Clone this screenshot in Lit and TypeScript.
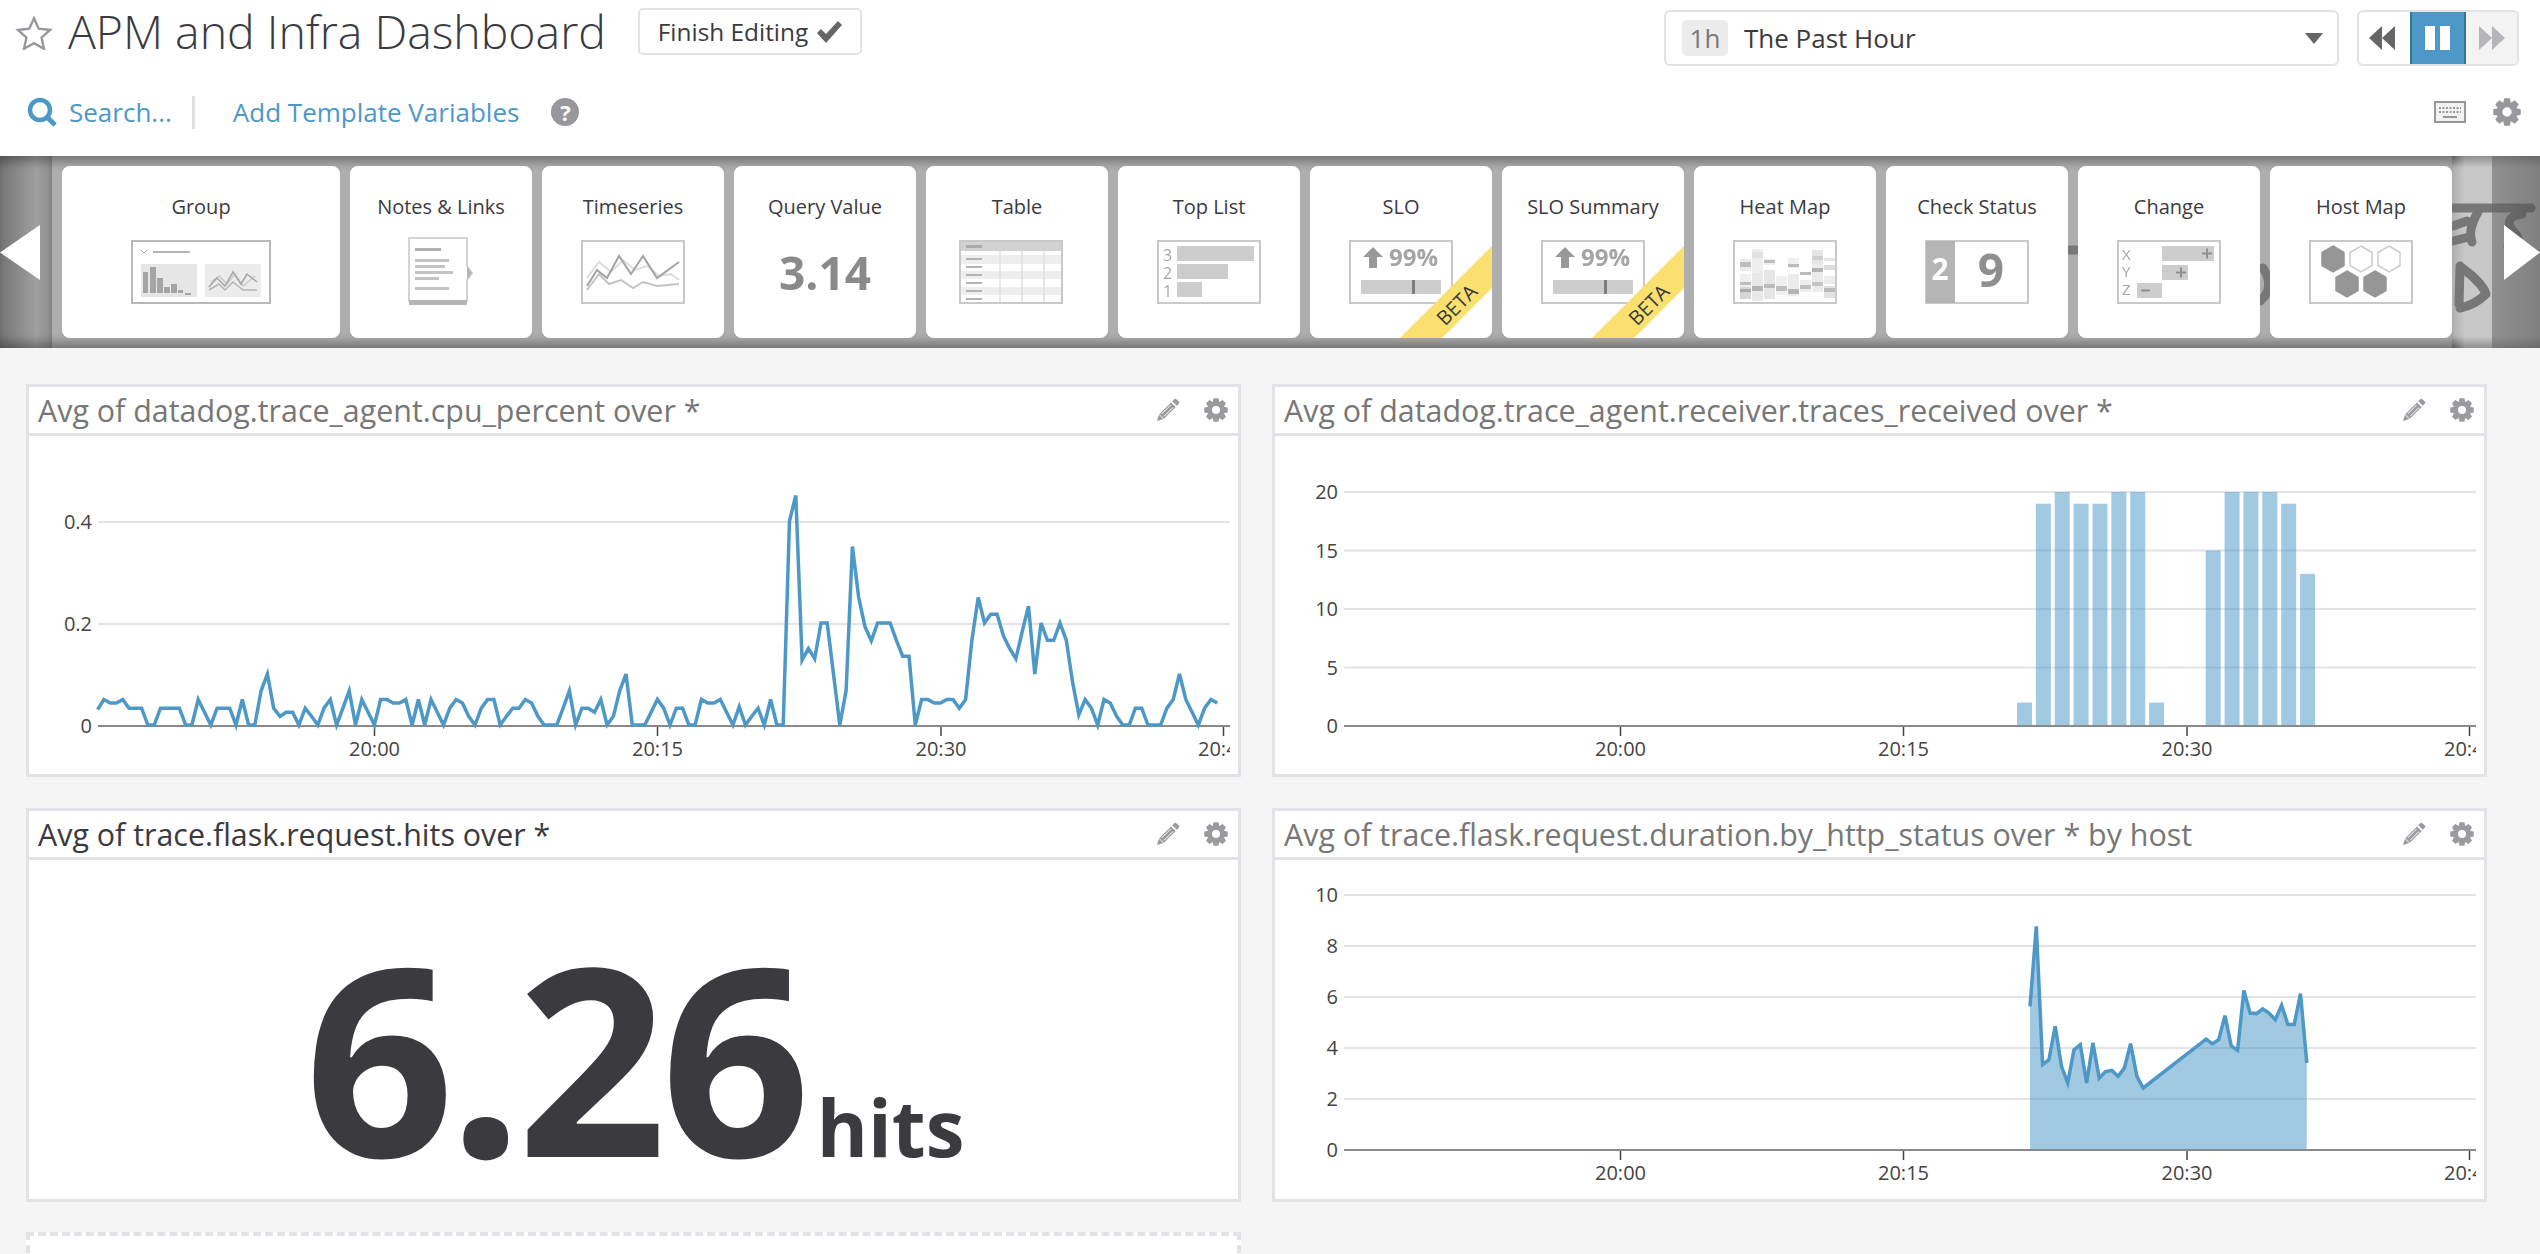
import {LitElement, html, svg, css} from 'lit';
import {customElement} from 'lit/decorators.js';

// 20 second samples, in thousandths
const cpuValues = [
    30, 50, 43, 43, 50, 33, 33, 33, 0, 0, 33, 33, 33, 33, 0, 0, 50, 25, 0, 33,
    33, 33, 0, 50, 0, 0, 67, 100, 33, 17, 25, 25, 0, 33, 17, 0, 33, 50, 0, 33,
    67, 0, 50, 25, 0, 50, 50, 43, 43, 50, 0, 50, 0, 50, 25, 0, 33, 50, 43, 17,
    0, 33, 50, 50, 0, 17, 33, 33, 50, 43, 17, 0, 0, 0, 33, 67, 0, 33, 33, 25,
    50, 0, 17, 67, 100, 0, 0,
    0, 25, 50, 33, 0, 33, 33, 0, 0, 50, 43, 43, 50, 25, 0, 36, 0, 17, 33, 0,
    50, 0, 0, 400, 450, 127, 150, 130, 200, 200, 100, 0, 67, 350, 250, 193, 165, 200, 200, 200,
    166, 135, 135, 0, 50, 50, 43, 43, 50, 50, 33, 50, 166, 250, 200, 217, 217, 175, 150, 130,
    183, 233, 100, 200, 166, 166, 200, 166, 85, 20, 50, 33, 0, 50, 43, 17, 0, 0, 33, 33,
    0, 0, 0, 33, 50, 100, 50, 25, 0, 33, 50, 43,
];

const tracesValues = [2, 19, 20, 19, 19, 20, 20, 2, 0, 0, 15, 20, 20, 20, 19, 13];

const durationValues: [number, number][] = [
    [0, 5.63], [1, 8.77], [2, 3.35], [3, 3.54], [4, 4.85], [5, 3.28], [6, 2.63], [7, 3.93],
    [8, 4.13], [9, 2.63], [10, 4.2], [11, 2.82], [12, 3.08], [13, 3.12], [14, 2.89], [15, 3.22],
    [16, 4.17], [17, 2.89], [18, 2.43], [28, 4.35], [29, 4.16], [30, 4.33], [31, 5.27], [32, 4.07],
    [33, 3.91], [34, 6.26], [35, 5.37], [36, 5.35], [37, 5.53], [38, 5.37], [39, 5.11], [40, 5.67],
    [41, 4.92], [42, 4.92], [43, 6.13], [44, 3.41],
];

const gearPath = (() => {
    const pts: string[] = [];
    for (let i = 0; i < 8; i++) {
        const a = (i * Math.PI) / 4;
        const p = (r: number, d: number) => {
            const x = 12 + r * Math.cos(a + d);
            const y = 12 + r * Math.sin(a + d);
            return `${x.toFixed(2)} ${y.toFixed(2)}`;
        };
        pts.push(p(8.6, -0.39), p(12, -0.2), p(12, 0.2), p(8.6, 0.39));
    }
    return `M${pts.join('L')}Z M16 12a4 4 0 1 0-8 0a4 4 0 1 0 8 0Z`;
})();

const gear = (cls: string) => html`<svg class=${cls} viewBox="0 0 24 24"><path fill-rule="evenodd" d=${gearPath}></path></svg>`;

const pencil = html`<svg class="pencil" viewBox="0 0 24 24">
    <path d="M18.2 1.2a1.6 1.6 0 0 1 2.2 0l2.4 2.4a1.6 1.6 0 0 1 0 2.2l-2 2-4.6-4.6zM15 4.4 19.6 9 7.6 21 2.6 22.6 1 23l.4-1.6L3 16.4z"></path>
    <path d="M14.6 7 5.6 16M17 9.4 8 18.4" stroke="#fff" stroke-width="1" fill="none"></path>
    <path d="M3 16.4 7.6 21" stroke="#fff" stroke-width="1" fill="none"></path>
</svg>`;

const heatCells: [number, number, number, string][] = [
    [7, 19, 12, '#ececec'], [7, 22, 5, '#bdbdbd'], [7, 34, 16, '#efefef'], [7, 42, 3, '#bdbdbd'], [7, 47, 12, '#d6d6d6'], [7, 49, 3, '#aaa'],
    [19, 9, 24, '#eeeeee'], [19, 33, 28, '#e8e8e8'], [19, 46, 5, '#b4b4b4'], [19, 12, 6, '#e2e2e2'],
    [31, 19, 6, '#efefef'], [31, 20, 3, '#bbb'], [31, 30, 29, '#e6e6e6'], [31, 44, 4, '#bbb'],
    [43, 36, 19, '#f0f0f0'], [43, 46, 5, '#bdbdbd'],
    [55, 18, 10, '#efefef'], [55, 24, 3, '#bbb'], [55, 34, 22, '#ececec'], [55, 49, 5, '#b4b4b4'],
    [67, 32, 3, '#bbb'], [67, 40, 12, '#ededed'], [67, 45, 4, '#c0c0c0'],
    [79, 10, 14, '#e6e6e6'], [79, 16, 4, '#cfcfcf'], [79, 24, 28, '#ececec'], [79, 28, 4, '#b4b4b4'], [79, 42, 4, '#c4c4c4'],
    [91, 18, 3, '#e4e4e4'], [91, 25, 5, '#dcdcdc'], [91, 36, 8, '#ededed'], [91, 46, 12, '#e2e2e2'], [91, 48, 4, '#bbb'],
];

const hex = (cx: number, cy: number, solid: boolean) => {
    const pts = [[0, -13], [11, -6.5], [11, 6.5], [0, 13], [-11, 6.5], [-11, -6.5]]
        .map(([x, y]) => `${cx + x},${cy + y}`).join(' ');
    return svg`<polygon points=${pts} fill=${solid ? '#969696' : '#fff'} stroke=${solid ? '#969696' : '#ccc'} stroke-width="1.5"></polygon>`;
};

const frame = svg`<rect x="1" y="1" width="102" height="62" fill="#fff" stroke="#c9c9c9" stroke-width="2"></rect>`;

const thumb = (body: unknown, cls = '') => html`<svg class="thumb ${cls}" viewBox="0 0 104 64">${frame}${body}</svg>`;

const seriesThumb = svg`
    <polyline points="6,38 18,22 30,32 42,20 54,30 66,26 78,36 90,34 98,40" fill="none" stroke="#dcdcdc" stroke-width="2"></polyline>
    <polyline points="6,50 18,34 28,44 40,40 52,48 62,42 76,46 98,44" fill="none" stroke="#c4c4c4" stroke-width="2"></polyline>
    <polyline points="6,46 16,30 26,38 38,16 50,34 62,16 76,38 98,22" fill="none" stroke="#a3a3a3" stroke-width="2"></polyline>`;

const sloThumb = svg`
    <path d="M24 7l10 10h-6v11h-8V17h-6z" fill="#989898"></path><text x="40" y="26" class="tx strong" font-size="24">99%</text>
    <rect x="12" y="40" width="80" height="14" fill="#cdcdcd"></rect><rect x="63" y="40" width="3" height="14" fill="#7d7d7d"></rect>`;

const widgets = [
    {name: 'Group', icon: html`<svg class="thumb wide" viewBox="0 0 140 64">
        <rect x="1" y="1" width="138" height="62" fill="#fff" stroke="#b9b9b9" stroke-width="2"></rect>
        <path d="M10 10l3 3 3-3" fill="none" stroke="#aaa"></path><rect x="22" y="11" width="37" height="2" fill="#b4b4b4"></rect>
        <rect x="10" y="24" width="56" height="33" fill="#e6e6e6"></rect><rect x="74" y="24" width="56" height="33" fill="#ececec"></rect>
        <path d="M12 53V32h5v21zM19 53V27h6v26zM26 53V38h6v15zM33 53V47h6v6zM40 53V44h6v9zM47 53V50h5v3zM54 55V53h6v2z" fill="#a5a5a5"></path>
        <polyline points="80,42 88,36 96,44 104,34 112,46 124,36" fill="none" stroke="#c9c9c9" stroke-width="1.5"></polyline>
        <polyline points="78,50 88,44 94,50 102,42 112,50 126,50" fill="none" stroke="#b5b5b5" stroke-width="1.5"></polyline>
        <polyline points="78,47 86,38 94,46 102,32 110,44 116,34 126,42" fill="none" stroke="#a6a6a6" stroke-width="1.5"></polyline>
    </svg>`},
    {name: 'Notes & Links', icon: html`<svg class="thumb" viewBox="0 0 104 64">
        <path d="M20 -2h58v28l5 7-5 7v21H20z" fill="#fff" stroke="#d4d4d4" stroke-width="2"></path>
        <path d="M78 26l5 7-5 7z" fill="#b5b5b5"></path>
        <rect x="20" y="60" width="58" height="5" fill="#b5b5b5"></rect>
        <rect x="26" y="8" width="26" height="3" fill="#b0b0b0"></rect><rect x="26" y="19" width="34" height="3" fill="#c4c4c4"></rect>
        <rect x="26" y="25" width="30" height="3" fill="#c4c4c4"></rect><rect x="26" y="31" width="38" height="3" fill="#c4c4c4"></rect>
        <rect x="26" y="37" width="24" height="3" fill="#c4c4c4"></rect><rect x="26" y="47" width="34" height="3" fill="#c4c4c4"></rect>
    </svg>`},
    {name: 'Timeseries', icon: thumb(seriesThumb)},
    {name: 'Query Value', icon: html`<div class="qv">3.14</div>`},
    {name: 'Table', icon: thumb(svg`
        <rect x="2" y="2" width="100" height="9" fill="#d2d2d2"></rect><rect x="7" y="5" width="16" height="3" fill="#aaa"></rect>
        <rect x="2" y="15" width="100" height="9" fill="#eeeeee"></rect><rect x="2" y="31" width="100" height="8" fill="#eeeeee"></rect><rect x="2" y="47" width="100" height="8" fill="#eeeeee"></rect>
        <path d="M41 11v51M63 11v51M85 11v51" stroke="#e0e0e0" stroke-width="1.5"></path>
        <path d="M7 19h16M7 27h16M7 35h16M7 43h16M7 51h16M7 59h16" stroke="#b4b4b4" stroke-width="2"></path>`, 'table')},
    {name: 'Top List', icon: thumb(svg`
        <text x="6" y="21" class="tx" font-size="16">3</text><text x="6" y="39" class="tx" font-size="16">2</text><text x="6" y="57" class="tx" font-size="16">1</text>
        <rect x="20" y="6" width="77" height="15" fill="#cdcdcd"></rect><rect x="20" y="24" width="51" height="15" fill="#cdcdcd"></rect><rect x="20" y="42" width="25" height="15" fill="#cdcdcd"></rect>`)},
    {name: 'SLO', beta: true, icon: thumb(sloThumb)},
    {name: 'SLO Summary', beta: true, icon: thumb(sloThumb)},
    {name: 'Heat Map', icon: thumb(heatCells.map(([x, y, h, c]) => svg`<rect x=${x} y=${y} width="11" height=${h} fill=${c}></rect>`))},
    {name: 'Check Status', icon: thumb(svg`
        <rect x="1" y="1" width="29" height="62" fill="#b5b5b5"></rect>
        <text x="15" y="40" text-anchor="middle" class="tx strong light" font-size="30">2</text>
        <text x="66" y="47" text-anchor="middle" class="tx strong dark" font-size="46">9</text>`)},
    {name: 'Change', icon: thumb(svg`
        <text x="5" y="20" class="tx" font-size="15">X</text><text x="5" y="37" class="tx" font-size="15">Y</text><text x="5" y="55" class="tx" font-size="15">Z</text>
        <rect x="45" y="6" width="52" height="15" fill="#cdcdcd"></rect><rect x="45" y="25" width="26" height="15" fill="#cdcdcd"></rect><rect x="20" y="43" width="25" height="15" fill="#cdcdcd"></rect>
        <path d="M85 13.5h10M90 8.5v10M59 32.5h10M64 27.5v10M24 50.5h9" stroke="#8f8f8f" stroke-width="2"></path>`)},
    {name: 'Host Map', icon: thumb([hex(24, 19, true), hex(52, 19, false), hex(80, 19, false), hex(38, 44, true), hex(66, 44, true)])},
];

const X_AXIS = 69;
const X_END = 1201;
const Y_ZERO = 290;
const TICKS: [number, string][] = [[345.5, '20:00'], [628.5, '20:15'], [912, '20:30'], [1194.5, '20:45']];

function axes(labels: [number, string][]) {
    return svg`
        ${labels.map(([y, t]) => svg`
            ${t !== '0' ? svg`<line x1=${X_AXIS} x2=${X_END} y1=${y} y2=${y} class="grid"></line>` : ''}
            <text x="63" y=${y + 7} text-anchor="end" class="lbl">${t}</text>`)}
        ${TICKS.map(([x, t]) => svg`
            <line x1=${x} x2=${x} y1=${Y_ZERO} y2=${Y_ZERO + 10} class="tick"></line>
            <text x=${x} y=${Y_ZERO + 30} text-anchor="middle" class="lbl">${t}</text>`)}
    `;
}

const baseLine = svg`<line x1=${X_AXIS} x2=${X_END} y1=${Y_ZERO} y2=${Y_ZERO} class="axis"></line>`;

function chart(content: unknown) {
    return html`<svg class="chart" width="1201" height="338" viewBox="0 0 1201 338">${content}</svg>`;
}

function cpuChart() {
    const pts = cpuValues.map((v, i) => `${(68.6 + i * 6.29).toFixed(1)},${(Y_ZERO - 1 - v * 0.51).toFixed(1)}`).join(' ');
    return chart(svg`
        ${axes([[86, '0.4'], [188, '0.2'], [290, '0']])}
        ${baseLine}
        <polyline points=${pts} class="line"></polyline>`);
}

function tracesChart() {
    const unit = 234 / 20;
    return chart(svg`
        ${axes([[56, '20'], [114.5, '15'], [173, '10'], [231.5, '5'], [290, '0']])}
        ${tracesValues.map((v, i) => v === 0 ? '' : svg`<rect class="bar" x=${742 + i * 18.87} y=${Y_ZERO - v * unit} width="15" height=${v * unit}></rect>`)}
        ${baseLine}`);
}

function durationChart() {
    const at = (i: number) => 755 + i * 6.29;
    const pts = durationValues.map(([i, v]) => `${at(i).toFixed(1)},${(Y_ZERO - v * 25.5).toFixed(1)}`).join(' ');
    const area = `${at(0)},${Y_ZERO} ${pts} ${at(44)},${Y_ZERO}`;
    return chart(svg`
        ${axes([[35, '10'], [86, '8'], [137, '6'], [188, '4'], [239, '2'], [290, '0']])}
        <polygon points=${area} class="bar"></polygon>
        <polyline points=${pts} class="line"></polyline>
        ${baseLine}`);
}

@customElement('app-root')
export class AppRoot extends LitElement {
    static override styles = css`
        :host {
            display: block;
            width: 2540px;
            height: 1254px;
            overflow: hidden;
            background: #f5f5f5;
            font-family: 'Open Sans', 'Liberation Sans', sans-serif;
            color: #3b3a3f;
        }
        .top {
            height: 156px;
            background: #fff;
            box-sizing: border-box;
            display: flex;
            flex-direction: column;
        }
        .row1 {
            display: flex;
            align-items: flex-start;
            height: 86px;
            padding-top: 8px;
            box-sizing: border-box;
        }
        .star {
            width: 38px;
            height: 34px;
            margin: 8px 0 0 15px;
        }
        .title {
            font-size: 46.4px;
            font-weight: 300;
            line-height: 48px;
            margin: -1px 0 0 15px;
            width: 570px;
            white-space: nowrap;
        }
        .finish {
            width: 224px;
            height: 47px;
            box-sizing: border-box;
            border: 2.5px solid #e2e2e7;
            border-radius: 5px;
            display: flex;
            align-items: center;
            justify-content: center;
            gap: 9px;
            font-size: 24.4px;
        }
        .finish svg {
            width: 25px;
            height: 22px;
            fill: #666;
        }
        .select {
            margin: 2px 0 0 802px;
            width: 675px;
            height: 56px;
            box-sizing: border-box;
            border: 2.5px solid #e2e2e7;
            border-radius: 6px;
            display: flex;
            align-items: center;
            padding-left: 16px;
            font-size: 26px;
        }
        .badge {
            width: 46px;
            height: 36px;
            background: #ececec;
            border-radius: 5px;
            color: #777;
            text-align: center;
            line-height: 36px;
            margin-right: 16px;
        }
        .past {
            flex: 1;
        }
        .caret {
            width: 0;
            height: 0;
            border-left: 9px solid transparent;
            border-right: 9px solid transparent;
            border-top: 11px solid #666;
            margin-right: 14px;
        }
        .play {
            margin: 2px 0 0 18px;
            width: 162px;
            height: 56px;
            box-sizing: border-box;
            border: 2.5px solid #e2e2e7;
            border-radius: 6px;
            display: flex;
            overflow: hidden;
        }
        .pbtn {
            display: flex;
            align-items: center;
            justify-content: center;
        }
        .pbtn svg {
            width: 26px;
            height: 24px;
        }
        .pbtn.back {
            width: 51px;
            padding-right: 5px;
            box-sizing: border-box;
            fill: #666;
        }
        .pbtn.pause {
            width: 56px;
            margin-top: -2.5px;
            margin-bottom: -2.5px;
            background: #4d98c7;
            border: 2px solid #33759f;
            box-sizing: border-box;
            fill: #fff;
        }
        .pbtn.next {
            flex: 1;
            background: #f3f3f3;
            fill: #b5b5ba;
        }
        .row2 {
            display: flex;
            align-items: center;
            height: 56px;
            margin-top: -2px;
            color: #4d98c7;
            font-size: 26px;
        }
        .search {
            width: 30px;
            height: 30px;
            margin: 0 12px 0 27px;
            fill: none;
            stroke: #4d98c7;
        }
        .divider {
            width: 3px;
            height: 33px;
            background: #e0e0e5;
            margin: 0 38px 0 20px;
        }
        .help {
            width: 28px;
            height: 28px;
            border-radius: 50%;
            background: #97979c;
            color: #fff;
            font-weight: 700;
            font-size: 22px;
            line-height: 28px;
            text-align: center;
            margin-left: 32px;
        }
        .spacer {
            flex: 1;
        }
        .keys {
            width: 32px;
            height: 22px;
            margin-right: 27px;
        }
        .gear-lg {
            width: 28px;
            height: 28px;
            fill: #97979c;
            margin-right: 19px;
        }
        .toolbar {
            position: relative;
            height: 192px;
            display: flex;
            background: #aeaeae;
            box-shadow: inset 0 12px 10px -6px rgba(0, 0, 0, 0.32), inset 0 -12px 10px -6px rgba(0, 0, 0, 0.32);
        }
        .nav {
            width: 52px;
            flex: none;
            display: flex;
            align-items: center;
            background: linear-gradient(90deg, #747474, #a0a0a0 70%, #8c8c8c);
            box-shadow: inset 0 12px 10px -6px rgba(0, 0, 0, 0.3), inset 0 -12px 10px -6px rgba(0, 0, 0, 0.3);
        }
        .nav.left {
            justify-content: flex-start;
        }
        .nav.right {
            width: 48px;
            justify-content: flex-end;
            background: linear-gradient(90deg, rgba(100, 100, 100, 0.55), rgba(80, 80, 80, 0.6));
            box-shadow: none;
            z-index: 2;
        }
        .nav svg {
            width: 40px;
            height: 55px;
            fill: #fff;
        }
        .nav.right svg {
            width: 36px;
        }
        .cards {
            display: flex;
            gap: 10px;
            padding: 10px 0 10px 10px;
            z-index: 1;
        }
        .card {
            position: relative;
            width: 182px;
            height: 172px;
            background: #fff;
            border-radius: 8px;
            overflow: hidden;
            text-align: center;
            font-size: 20px;
            padding-top: 27px;
            box-sizing: border-box;
            line-height: 28px;
        }
        .card.big {
            width: 278px;
        }
        .thumb {
            display: block;
            width: 104px;
            height: 64px;
            margin: 19px auto 0;
            filter: blur(0.4px);
            overflow: visible;
        }
        .thumb.wide {
            width: 140px;
        }
        .thumb.table {
            margin-left: 33px;
        }
        .tx {
            font-family: 'Open Sans', sans-serif;
            fill: #a5a5a5;
        }
        .tx.strong {
            font-weight: 700;
        }
        .tx.dark {
            fill: #8f8f8f;
        }
        .tx.light {
            fill: #fff;
        }
        .qv {
            font-size: 46px;
            font-weight: 700;
            color: #8a8a8a;
            line-height: 64px;
            margin-top: 19px;
            filter: blur(0.5px);
        }
        .ribbon {
            position: absolute;
            inset: 0;
        }
        .ribbon text {
            font-family: 'Open Sans', sans-serif;
            font-size: 20px;
            fill: #3b3a3f;
        }
        .doodle {
            position: absolute;
            left: 1880px;
            top: 0;
            width: 660px;
            height: 192px;
            fill: none;
            stroke: #777;
            stroke-width: 9;
            stroke-linecap: round;
            stroke-linejoin: round;
            background:
                linear-gradient(180deg, rgba(0, 0, 0, 0.28), transparent 12px, transparent 180px, rgba(0, 0, 0, 0.28)) right top / 88px 100% no-repeat,
                linear-gradient(90deg, transparent, #c8c8c8 13px) right top / 88px 100% no-repeat;
        }
        .grid-area {
            display: grid;
            grid-template-columns: 1215px 1215px;
            grid-template-rows: 393px 394px 60px;
            column-gap: 31px;
            row-gap: 31px;
            padding: 36px 0 0 26px;
        }
        .panel {
            background: #fff;
            border: 3px solid #e2e2e7;
            box-sizing: border-box;
            min-width: 0;
        }
        .panel.dashed {
            border-style: dashed;
            border-width: 4px;
            margin-top: -1px;
        }
        .head {
            height: 49px;
            box-sizing: border-box;
            border-bottom: 3px solid #e2e2e7;
            display: flex;
            align-items: center;
            padding: 0 10px 0 9px;
            font-size: 30.4px;
            color: #777;
            white-space: nowrap;
        }
        .head.dark {
            color: #3b3a3f;
        }
        .head .name {
            flex: 1;
        }
        .pencil {
            width: 24px;
            height: 24px;
            fill: #9a9a9f;
            margin-right: 24px;
        }
        .gear-sm {
            width: 24px;
            height: 24px;
            fill: #9a9a9f;
        }
        .chart {
            display: block;
        }
        .grid {
            stroke: #e3e3e8;
            stroke-width: 2;
        }
        .axis {
            stroke: #8a8a8a;
            stroke-width: 2;
        }
        .tick {
            stroke: #444;
            stroke-width: 1.5;
        }
        .lbl {
            font-family: 'Open Sans', sans-serif;
            font-size: 20px;
            fill: #444;
        }
        .line {
            fill: none;
            stroke: #4d98c7;
            stroke-width: 3.5;
            stroke-linejoin: miter;
        }
        .bar {
            fill: #4d98c7;
            fill-opacity: 0.52;
        }
        .big-value {
            display: flex;
            justify-content: center;
            align-items: baseline;
            height: 340px;
            color: #3b3a3f;
            font-weight: 700;
            padding: 86px 0 0 2px;
            box-sizing: border-box;
        }
        .big-value .num {
            font-size: 262px;
            line-height: 220px;
            letter-spacing: -6px;
        }
        .big-value .unit {
            font-size: 78px;
            line-height: 80px;
            margin-left: 12px;
        }
    `;

    private panel(title: string, body: unknown, dark = false) {
        return html`
        <div class="panel">
            <div class="head ${dark ? 'dark' : ''}">
                <span class="name">${title}</span>
                ${pencil}
                ${gear('gear-sm')}
            </div>
            ${body}
        </div>`;
    }

    override render() {
        return html`
        <div class="top">
            <div class="row1">
                <svg class="star" viewBox="0 0 38 36"><path d="M19 2.5l5 11 12 1.3-9 8.1 2.6 11.8L19 28.7 8.4 34.7 11 22.9 2 14.8l12-1.3z" fill="#fff" stroke="#97979c" stroke-width="2.5"></path></svg>
                <div class="title">APM and Infra Dashboard</div>
                <div class="finish">Finish Editing <svg viewBox="0 0 25 22"><path d="M0 12l4-4 5 5L21 0l4 4L9 22z"></path></svg></div>
                <div class="select">
                    <span class="badge">1h</span>
                    <span class="past">The Past Hour</span>
                    <span class="caret"></span>
                </div>
                <div class="play">
                    <div class="pbtn back"><svg viewBox="0 0 26 24"><path d="M13 0v24L0 12zM26 0v24L13 12z"></path></svg></div>
                    <div class="pbtn pause"><svg viewBox="0 0 26 24"><path d="M0 0h10v24H0zM15 0h10v24H15z"></path></svg></div>
                    <div class="pbtn next"><svg viewBox="0 0 26 24"><path d="M0 0l13 12L0 24zM13 0l13 12-13 12z"></path></svg></div>
                </div>
            </div>
            <div class="row2">
                <svg class="search" viewBox="0 0 30 30"><circle cx="13" cy="13" r="10" stroke-width="4.5"></circle><path d="M20 20l8 8" stroke-width="5"></path></svg>
                <span>Search...</span>
                <span class="divider"></span>
                <span>Add Template Variables</span>
                <span class="help">?</span>
                <span class="spacer"></span>
                <svg class="keys" viewBox="0 0 32 22">
                    <rect x="1" y="1" width="30" height="20" fill="#f2f2f2" stroke="#97979c" stroke-width="2"></rect>
                    <path d="M5 7h22M5 11h22" stroke="#97979c" stroke-width="2" stroke-dasharray="2 1.5"></path>
                    <path d="M9 16h14" stroke="#97979c" stroke-width="2"></path>
                </svg>
                ${gear('gear-lg')}
            </div>
        </div>
        <div class="toolbar">
            <div class="nav left"><svg viewBox="0 0 40 55"><path d="M40 0v55L0 27.5z"></path></svg></div>
            <div class="cards">
                ${widgets.map((w, i) => html`
                <div class="card ${i === 0 ? 'big' : ''}">
                    ${w.name}
                    ${w.icon}
                    ${w.beta ? html`<svg class="ribbon" viewBox="0 0 182 172">
                        <polygon points="90,172 132,172 182,122 182,80" fill="#fae06e"></polygon>
                        <text transform="translate(147 139) rotate(-45)" text-anchor="middle" y="7">BETA</text>
                    </svg>` : ''}
                </div>`)}
            </div>
            <svg class="doodle" viewBox="0 0 660 192">
                <path d="M190 94h8"></path>
                <path d="M383 112c8 12 8 24-3 33"></path>
                <path d="M573 52h78"></path>
                <path d="M598 56c-7 12-9 22-6 30"></path>
                <path d="M573 70l14-5M573 85l12-3"></path>
                <path d="M642 58c-14 2-16 10-8 18 6 6 6 10-6 14"></path>
                <path d="M580 110l-1 38"></path>
                <path d="M582 112c14 10 22 20 24 26-6 6-16 12-26 14"></path>
            </svg>
            <span class="spacer"></span>
            <div class="nav right"><svg viewBox="0 0 36 55"><path d="M0 0l36 27.5L0 55z"></path></svg></div>
        </div>
        <div class="grid-area">
            ${this.panel('Avg of datadog.trace_agent.cpu_percent over *', cpuChart())}
            ${this.panel('Avg of datadog.trace_agent.receiver.traces_received over *', tracesChart())}
            ${this.panel('Avg of trace.flask.request.hits over *', html`<div class="big-value"><span class="num">6.26</span><span class="unit">hits</span></div>`, true)}
            ${this.panel('Avg of trace.flask.request.duration.by_http_status over * by host', durationChart())}
            <div class="panel dashed"></div>
        </div>
        `;
    }
}
